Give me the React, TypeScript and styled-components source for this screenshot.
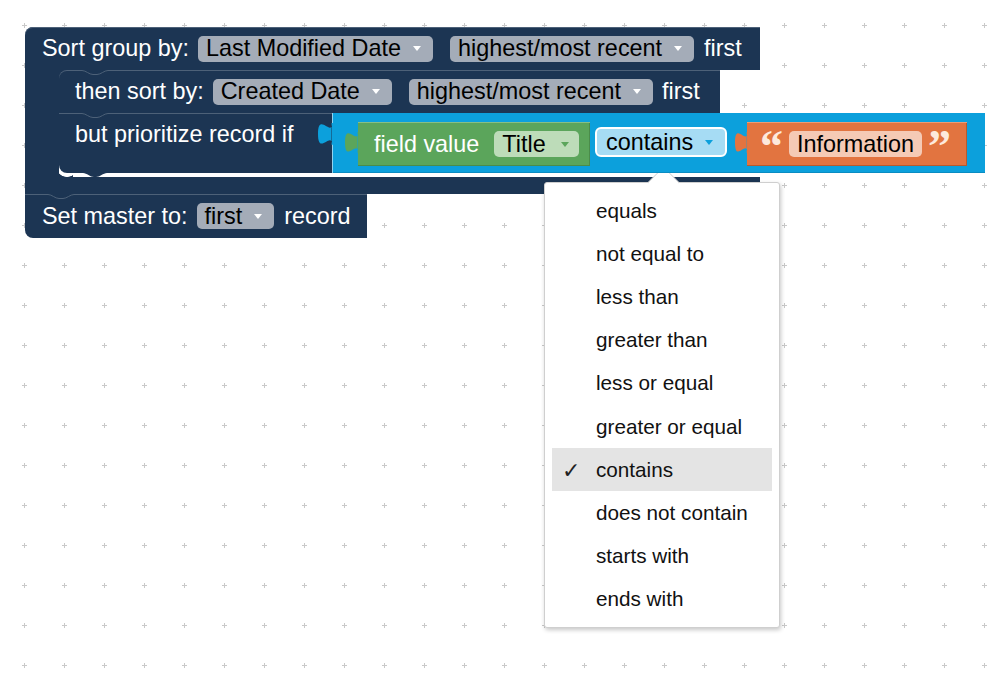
import React from "react";
import styled, { createGlobalStyle } from "styled-components";

const NAVY = "#1c3553";
const EDGE = "#4d6178";
const BLUE = "#0ca0dc";
const GREEN = "#5ba55b";
const ORANGE = "#e27440";
const PILL_GRAY = "#a4acb8";

const GlobalStyle = createGlobalStyle`
  html, body { margin: 0; padding: 0; background: #fff; }
  body { font-family: "Liberation Sans", Arial, sans-serif; }
`;

const Workspace = styled.div`
  position: relative;
  width: 1005px;
  height: 683px;
  overflow: hidden;
  background: #fff;
`;

const GridSvg = styled.svg`
  position: absolute;
  left: 0;
  top: 0;
`;

function Grid() {
  return (
    <GridSvg width="1005" height="683">
      <defs>
        <pattern id="ws-grid" x="4" y="5" width="40" height="40" patternUnits="userSpaceOnUse">
          <path d="M18 20.5 H23 M20.5 18 V23" stroke="#c9c9c9" strokeWidth="1" />
        </pattern>
      </defs>
      <rect width="1005" height="683" fill="url(#ws-grid)" />
    </GridSvg>
  );
}

/* ---------- blocks ---------- */

const Stack = styled.div`
  position: absolute;
  left: 25px;
  top: 27px;
  display: flex;
  flex-direction: column;
  align-items: flex-start;
  font-family: "Liberation Sans", Arial, sans-serif;
  font-size: 23.4px;
  color: #fff;
  white-space: nowrap;
`;

const CBlock = styled.div`
  display: flex;
  flex-direction: column;
  align-items: flex-start;
`;

const BlockRow = styled.div<{ $w: number; $h?: number; $radius?: string; $pl?: number }>`
  position: relative;
  box-sizing: border-box;
  width: ${(p) => p.$w}px;
  height: ${(p) => p.$h ?? 43}px;
  display: flex;
  align-items: center;
  gap: 9px;
  padding-left: ${(p) => p.$pl ?? 17}px;
  background: ${NAVY};
  border-radius: ${(p) => p.$radius ?? "0"};
  box-shadow: inset 0 1px 0 ${EDGE};
`;

const Label = styled.span<{ $ml?: number }>`
  display: block;
  line-height: 1.15;
  margin-left: ${(p) => p.$ml ?? 0}px;
`;

const Body = styled.div`
  position: relative;
  display: flex;
  &::before {
    content: "";
    position: absolute;
    left: 34px;
    top: 0;
    width: 12px;
    height: 12px;
    background: ${NAVY};
  }
  &::after {
    content: "";
    position: absolute;
    left: 34px;
    bottom: 0;
    width: 14px;
    height: 14px;
    background: radial-gradient(circle at 8px 3px, transparent 10.5px, ${NAVY} 11.2px);
  }
`;

const LeftArm = styled.div`
  flex: none;
  width: 34px;
  background: ${NAVY};
`;

const Statements = styled.div`
  position: relative;
  z-index: 1;
  display: flex;
  flex-direction: column;
  align-items: flex-start;
  padding-bottom: 4px;
`;

const BottomArm = styled.div`
  width: 735px;
  height: 17px;
  background: ${NAVY};
`;

const PrioritizeBlock = styled.div`
  position: relative;
  display: flex;
  align-items: flex-start;
`;

const PrioLabelPart = styled.div`
  position: relative;
  box-sizing: border-box;
  width: 273px;
  height: 60px;
  padding-left: 16px;
  background: ${NAVY};
  border-radius: 0 0 0 8px;
  box-shadow: inset 0 1px 0 ${EDGE};
  line-height: 43px;
`;

const BlueBlock = styled.div`
  position: relative;
  box-sizing: border-box;
  width: 653px;
  height: 60px;
  display: flex;
  align-items: flex-start;
  padding: 9px 0 0 26px;
  background: ${BLUE};
  box-shadow: inset 1px 0 0 rgba(255, 255, 255, 0.55), inset 0 -1px 0 #0a8cc2;
`;

const GreenBlock = styled.div`
  position: relative;
  box-sizing: border-box;
  width: 232px;
  height: 44px;
  display: flex;
  align-items: center;
  gap: 15px;
  padding-left: 16px;
  background: ${GREEN};
  box-shadow: inset 0 1px 0 #86bf86, inset 0 -1px 0 #4a8c4a, inset -1px 0 0 #4a8c4a;
`;

const ContainsField = styled.div`
  box-sizing: border-box;
  width: 132px;
  height: 30px;
  margin: 5px 0 0 5px;
  display: flex;
  align-items: center;
  gap: 12px;
  padding-left: 9px;
  border: 2.5px solid #fff;
  border-radius: 6px;
  background: #a6dcf4;
  color: #000;
`;

const OrangeBlock = styled.div`
  position: relative;
  box-sizing: border-box;
  width: 220px;
  height: 44px;
  margin-left: 20px;
  display: flex;
  align-items: center;
  gap: 6px;
  padding-left: 13px;
  background: ${ORANGE};
  box-shadow: inset 0 1px 0 #ee9c74, inset 0 -1px 0 #b95a2c, inset -1px 0 0 #b95a2c;
`;

const Quote = styled.span`
  display: block;
  font-family: "Liberation Serif", "Times New Roman", serif;
  font-weight: bold;
  font-size: 46px;
  line-height: 44px;
  padding-top: 6px;
  color: #fde9dd;
`;

const Pill = styled.div<{ $bg: string; $ml?: number; $pr?: number; $gap?: number }>`
  flex: none;
  box-sizing: border-box;
  height: 26px;
  display: flex;
  align-items: center;
  gap: ${(p) => p.$gap ?? 12}px;
  margin-left: ${(p) => p.$ml ?? 0}px;
  padding: 0 ${(p) => p.$pr ?? 12}px 0 8px;
  border-radius: 5px;
  background: ${(p) => p.$bg};
  color: #000;
  line-height: 1.15;
`;

const CaretSvg = styled.svg`
  flex: none;
  display: block;
`;

function Caret({ color }: { color: string }) {
  return (
    <CaretSvg width="8" height="5" viewBox="0 0 8 5">
      <path d="M0 0 H8 L4 5 Z" fill={color} />
    </CaretSvg>
  );
}

const TabSvg = styled.svg<{ $left: number }>`
  position: absolute;
  left: ${(p) => p.$left}px;
  top: 10px;
  display: block;
`;

function PuzzleTab({ color, left, w, h }: { color: string; left: number; w: number; h: number }) {
  return (
    <TabSvg $left={left} width={w + 1} height={h} viewBox="0 0 15 22" preserveAspectRatio="none">
      <path d="M14 0 C14 14.5 0 -11.6 0 10.9 C0 33.4 14 7.3 14 21.8 Z M13.5 0 H15 V21.8 H13.5 Z" fill={color} />
    </TabSvg>
  );
}

const NotchSvg = styled.svg<{ $bottom?: boolean }>`
  position: absolute;
  left: 23px;
  ${(p) => (p.$bottom ? "bottom: -4px;" : "top: 0;")}
  display: block;
`;

function NotchLine() {
  return (
    <NotchSvg width="26" height="6" viewBox="0 0 26 6">
      <rect x="0" y="0" width="26" height="1.6" fill={NAVY} />
      <path d="M0 0.5 C4 0.5 7 4.5 11 4.5 H15 C19 4.5 22 0.5 26 0.5" stroke={EDGE} strokeWidth="1" fill="none" />
    </NotchSvg>
  );
}

function NotchTab() {
  return (
    <NotchSvg $bottom width="26" height="4" viewBox="0 0 26 4">
      <path d="M1 0 C5 0 8 4 12 4 H14 C18 4 21 0 25 0 Z" fill={NAVY} />
    </NotchSvg>
  );
}

/* ---------- dropdown menu ---------- */

const Menu = styled.div`
  position: absolute;
  left: 544px;
  top: 182px;
  width: 236px;
  box-sizing: border-box;
  padding: 6px 7px 6px;
  background: #fff;
  border: 1px solid #cfcfcf;
  border-radius: 3px;
  box-shadow: 1px 2px 4px rgba(0, 0, 0, 0.22);
  font-family: "Liberation Sans", Arial, sans-serif;
  font-size: 20.7px;
  color: #111;
`;

const MenuArrow = styled.div`
  position: absolute;
  left: 107px;
  top: -12px;
  width: 22px;
  height: 22px;
  background: #fff;
  transform: rotate(45deg);
  border-top: 1px solid #cfcfcf;
  border-left: 1px solid #cfcfcf;
  border-top-left-radius: 4px;
`;

const MenuItem = styled.div<{ $selected?: boolean }>`
  position: relative;
  height: 43.2px;
  display: flex;
  align-items: center;
  padding-left: 44px;
  background: ${(p) => (p.$selected ? "#e4e4e4" : "transparent")};
  white-space: nowrap;
`;

const Check = styled.span`
  position: absolute;
  left: 10px;
  top: 50%;
  transform: translateY(-50%);
  font-family: "DejaVu Sans", sans-serif;
  font-size: 22px;
  color: #222;
`;

const OPTIONS = [
  "equals",
  "not equal to",
  "less than",
  "greater than",
  "less or equal",
  "greater or equal",
  "contains",
  "does not contain",
  "starts with",
  "ends with",
];

export default function App() {
  return (
    <>
      <GlobalStyle />
      <Workspace>
        <Grid />
        <Stack>
          <CBlock>
            <BlockRow $w={735} $radius="8px 0 0 0">
              <Label>Sort group by:</Label>
              <Pill $bg={PILL_GRAY}>
                Last Modified Date
                <Caret color="#fff" />
              </Pill>
              <Pill $bg={PILL_GRAY} $ml={8}>
                highest/most recent
                <Caret color="#fff" />
              </Pill>
              <Label $ml={1}>first</Label>
            </BlockRow>
            <Body>
              <LeftArm />
              <Statements>
                <BlockRow $w={661} $pl={16} $radius="8px 0 0 0">
                  <NotchLine />
                  <Label>then sort by:</Label>
                  <Pill $bg={PILL_GRAY}>
                    Created Date
                    <Caret color="#fff" />
                  </Pill>
                  <Pill $bg={PILL_GRAY} $ml={8}>
                    highest/most recent
                    <Caret color="#fff" />
                  </Pill>
                  <Label>first</Label>
                </BlockRow>
                <PrioritizeBlock>
                  <PrioLabelPart>
                    <NotchLine />
                    but prioritize record if
                    <NotchTab />
                  </PrioLabelPart>
                  <BlueBlock>
                    <PuzzleTab color={BLUE} left={-14} w={14} h={22} />
                    <GreenBlock>
                      <PuzzleTab color={GREEN} left={-13} w={13} h={21} />
                      <Label>field value</Label>
                      <Pill $bg="#bddcb9" $pr={10} $gap={15}>
                        Title
                        <Caret color={GREEN} />
                      </Pill>
                    </GreenBlock>
                    <ContainsField>
                      contains
                      <Caret color={BLUE} />
                    </ContainsField>
                    <OrangeBlock>
                      <PuzzleTab color={ORANGE} left={-12} w={12} h={21} />
                      <Quote>“</Quote>
                      <Pill $bg="#f5cab5" $pr={8}>
                        Information
                      </Pill>
                      <Quote>”</Quote>
                    </OrangeBlock>
                  </BlueBlock>
                </PrioritizeBlock>
              </Statements>
            </Body>
            <BottomArm />
          </CBlock>
          <BlockRow $w={342} $h={44} $radius="0 0 0 8px">
            <NotchLine />
            <Label>Set master to:</Label>
            <Pill $bg={PILL_GRAY}>
              first
              <Caret color="#fff" />
            </Pill>
            <Label $ml={1}>record</Label>
          </BlockRow>
        </Stack>
        <Menu>
          <MenuArrow />
          {OPTIONS.map((o) => (
            <MenuItem key={o} $selected={o === "contains"}>
              {o === "contains" && <Check>✓</Check>}
              {o}
            </MenuItem>
          ))}
        </Menu>
      </Workspace>
    </>
  );
}
